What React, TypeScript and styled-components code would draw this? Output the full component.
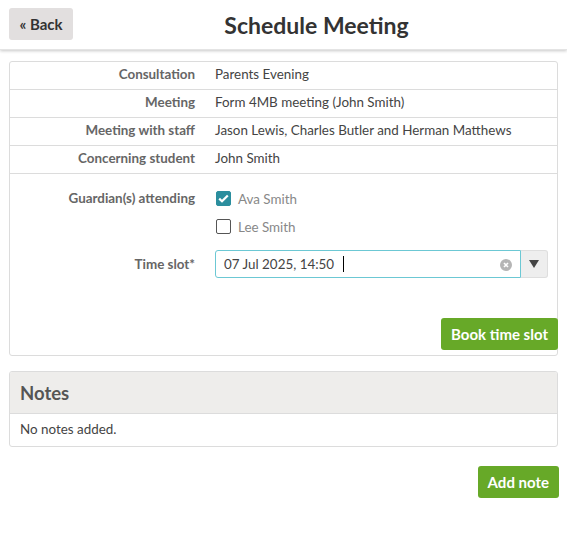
import { FC } from "react";
import styled, { createGlobalStyle } from "styled-components";

const GlobalStyle = createGlobalStyle`
  body {
    margin: 0;
    font-family: "Lato", "Noto Sans", sans-serif;
    color: #444;
    background: #fff;
  }
`;

const details = [
  { label: "Consultation", value: "Parents Evening" },
  { label: "Meeting", value: "Form 4MB meeting (John Smith)" },
  { label: "Meeting with staff", value: "Jason Lewis, Charles Butler and Herman Matthews" },
  { label: "Concerning student", value: "John Smith" },
];

const guardians = [
  { name: "Ava Smith", checked: true },
  { name: "Lee Smith", checked: false },
];

const App: FC = () => {
  return (
    <Page>
      <GlobalStyle />
      <Header>
        <BackButton type="button">« Back</BackButton>
        <Title>Schedule Meeting</Title>
      </Header>

      <Content>
        <Panel>
          {details.map((d) => (
            <DetailRow key={d.label}>
              <Label>{d.label}</Label>
              <Value>{d.value}</Value>
            </DetailRow>
          ))}

          <Form>
            <FieldRow>
              <Label>Guardian(s) attending</Label>
              <CheckList>
                {guardians.map((g) => (
                  <CheckItem key={g.name}>
                    <Box $checked={g.checked}>
                      {g.checked && (
                        <svg width="11" height="9" viewBox="0 0 11 9">
                          <path d="M1.2 4.6 L4 7.3 L9.8 1.4" fill="none" stroke="#fff" strokeWidth="2.2" />
                        </svg>
                      )}
                    </Box>
                    <span>{g.name}</span>
                  </CheckItem>
                ))}
              </CheckList>
            </FieldRow>

            <FieldRow $center>
              <Label>Time slot*</Label>
              <SelectWrap>
                <SelectInput>
                  <span>07 Jul 2025, 14:50</span>
                  <Caret />
                  <ClearIcon>
                    <svg width="12" height="12" viewBox="0 0 12 12">
                      <circle cx="6" cy="6" r="6" fill="#b5b5b5" />
                      <path d="M4 4 L8 8 M8 4 L4 8" stroke="#fff" strokeWidth="1.6" />
                    </svg>
                  </ClearIcon>
                </SelectInput>
                <DropButton>
                  <svg width="10" height="8" viewBox="0 0 10 8">
                    <path d="M0 0 H10 L5 8 Z" fill="#444" />
                  </svg>
                </DropButton>
              </SelectWrap>
            </FieldRow>

            <Actions $top={40}>
              <GreenButton type="button">Book time slot</GreenButton>
            </Actions>
          </Form>
        </Panel>

        <NotesPanel>
          <NotesHeader>Notes</NotesHeader>
          <NotesBody>No notes added.</NotesBody>
        </NotesPanel>

        <Actions $top={19}>
          <GreenButton type="button">Add note</GreenButton>
        </Actions>
      </Content>
    </Page>
  );
};

const Page = styled.div`
  width: 567px;
`;

const Header = styled.header`
  position: relative;
  height: 49px;
  display: flex;
  align-items: center;
  justify-content: center;
  box-shadow: 0 1px 3px rgba(0, 0, 0, 0.22);
  border-bottom: 1px solid #e4e4e4;
`;

const BackButton = styled.button`
  position: absolute;
  left: 9px;
  top: 8px;
  height: 32px;
  width: 64px;
  border: none;
  border-radius: 3px;
  background: #e2dfdf;
  color: #333;
  font-family: inherit;
  font-size: 15px;
  font-weight: 700;
  padding: 0;
`;

const Title = styled.h1`
  margin: 0 0 0 66px;
  font-size: 23px;
  font-weight: 700;
  color: #333;
`;

const Content = styled.div`
  padding: 11px 9px 0;
  display: flex;
  flex-direction: column;
`;

const Panel = styled.div`
  border: 1px solid #dcdcdc;
  border-radius: 3px;
`;

const DetailRow = styled.div`
  display: grid;
  grid-template-columns: 195px 1fr;
  align-items: center;
  border-bottom: 1px solid #dcdcdc;
  font-size: 13.4px;
  padding-bottom: 3px;
  box-sizing: border-box;
  height: 28px;
`;

const Label = styled.div`
  text-align: right;
  padding-right: 10px;
  font-weight: 700;
  color: #666;
  font-size: 13.4px;
`;

const Value = styled.div`
  padding-left: 10px;
  color: #444;
`;

const Form = styled.div`
  padding: 16px 0 5px;
  display: flex;
  flex-direction: column;
`;

const FieldRow = styled.div<{ $center?: boolean }>`
  display: grid;
  grid-template-columns: 195px 1fr;
  align-items: ${(p) => (p.$center ? "center" : "start")};
  margin-top: ${(p) => (p.$center ? "15px" : "0")};
`;

const CheckList = styled.div`
  display: flex;
  flex-direction: column;
  gap: 11px;
  padding-left: 11px;
`;

const CheckItem = styled.label`
  display: flex;
  align-items: center;
  gap: 7px;
  font-size: 13.4px;
  color: #888;
  height: 17px;
`;

const Box = styled.span<{ $checked: boolean }>`
  width: 15px;
  height: 15px;
  box-sizing: border-box;
  border-radius: 2px;
  display: flex;
  align-items: center;
  justify-content: center;
  background: ${(p) => (p.$checked ? "#2b8e9e" : "#fff")};
  border: 1px solid ${(p) => (p.$checked ? "#2b8e9e" : "#555")};
`;

const SelectWrap = styled.div`
  display: flex;
  margin-left: 10px;
  margin-right: 9px;
  height: 28px;
`;

const SelectInput = styled.div`
  position: relative;
  flex: 1;
  display: flex;
  align-items: center;
  border: 1px solid #6cc8d4;
  border-radius: 3px 0 0 3px;
  padding-left: 8px;
  font-size: 13.4px;
  color: #444;
`;

const Caret = styled.span`
  width: 1px;
  height: 16px;
  background: #000;
  margin-left: 9px;
`;

const ClearIcon = styled.span`
  position: absolute;
  right: 8px;
  top: 8px;
  display: flex;
`;

const DropButton = styled.div`
  width: 26px;
  display: flex;
  align-items: center;
  justify-content: center;
  background: #eeeeee;
  border: 1px solid #dedede;
  border-left: none;
  border-radius: 0 3px 3px 0;
`;

const Actions = styled.div<{ $top: number }>`
  display: flex;
  justify-content: flex-end;
  margin-top: ${(p) => p.$top}px;
`;

const GreenButton = styled.button`
  height: 32px;
  padding: 0 10px;
  border: none;
  border-radius: 3px;
  background: #67a928;
  color: #fff;
  font-family: inherit;
  font-size: 15px;
  font-weight: 700;
  margin-right: -1px;
`;

const NotesPanel = styled.div`
  margin-top: 15px;
  border: 1px solid #dcdcdc;
  border-radius: 3px;
  overflow: hidden;
`;

const NotesHeader = styled.div`
  height: 41px;
  display: flex;
  align-items: center;
  padding-left: 10px;
  background: #eeedeb;
  border-bottom: 1px solid #dcdcdc;
  font-size: 18.5px;
  font-weight: 700;
  color: #555;
`;

const NotesBody = styled.div`
  height: 32px;
  box-sizing: border-box;
  padding: 0 0 3px 10px;
  display: flex;
  align-items: center;
  font-size: 13.4px;
  color: #444;
`;

export default App;
